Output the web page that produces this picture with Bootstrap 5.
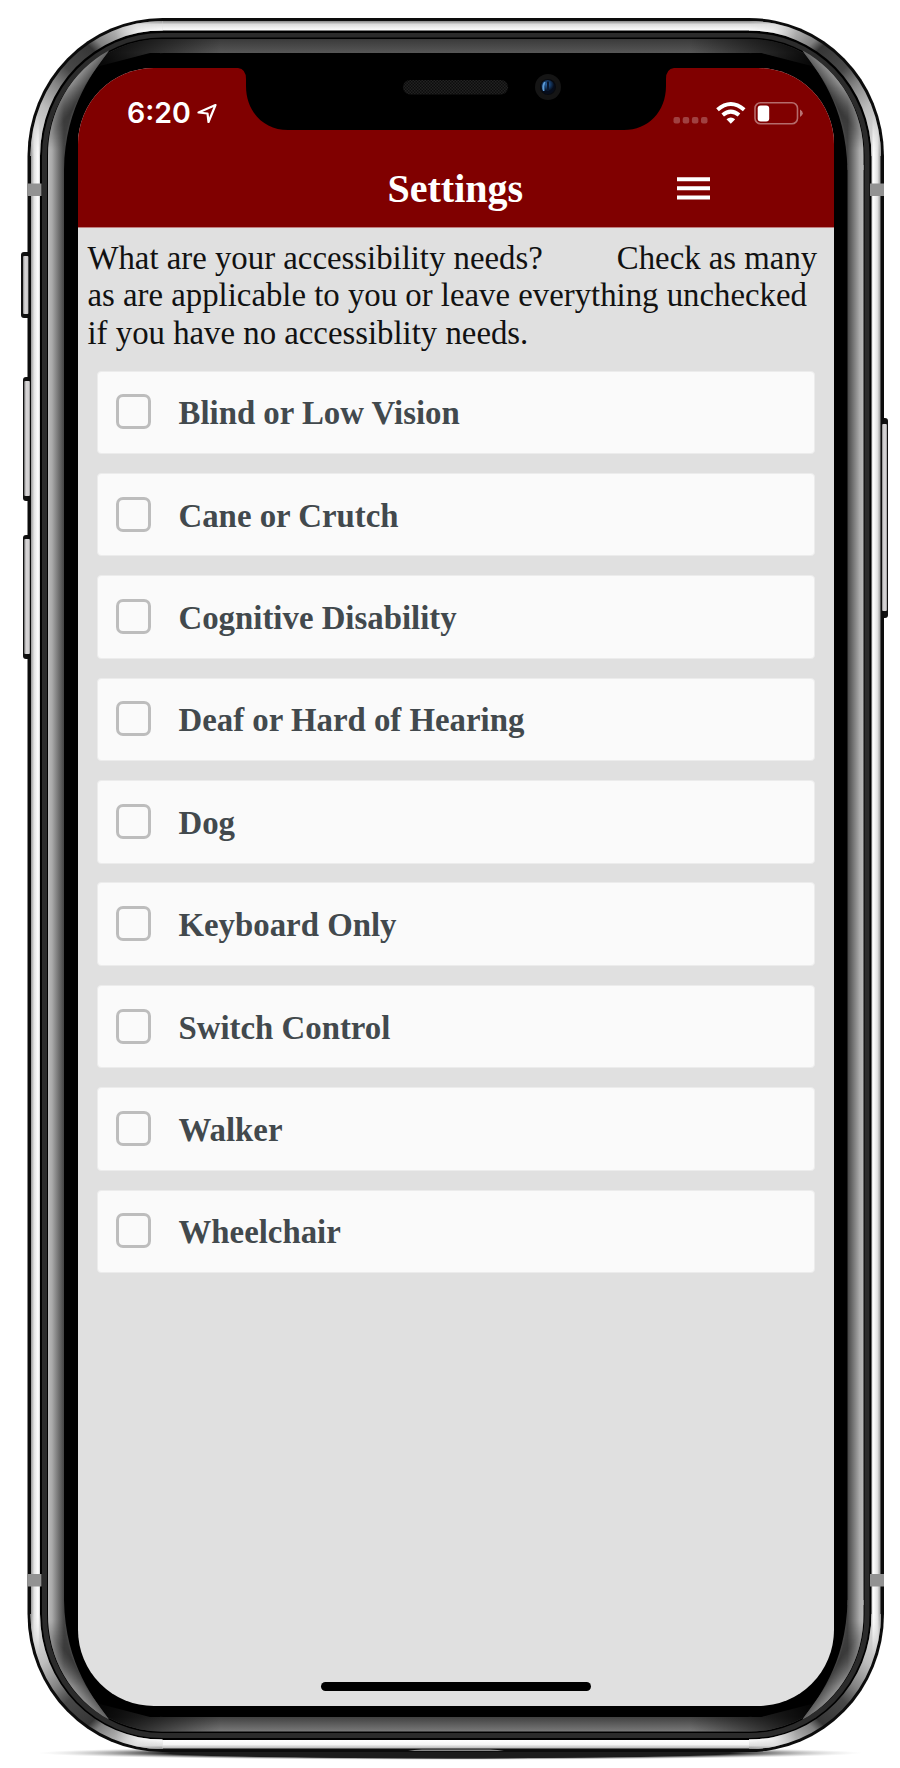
<!DOCTYPE html>
<html lang="en">
<head>
<meta charset="utf-8">
<meta name="viewport" content="width=device-width, initial-scale=1">
<title>Settings</title>
<link rel="stylesheet" href="https://cdn.jsdelivr.net/npm/bootstrap@5.3.0/dist/css/bootstrap.min.css">
<style>
  body { background: #fff; }
  .phone { width: 900px; height: 1768px; padding: 68px 66px 62px 78px; overflow: hidden; }
  .phone-art { position: absolute; left: 0; top: 0; pointer-events: none; }
  .screen { width: 756px; height: 1638px; background: #e0e0e0; border-radius: 76px; overflow: hidden; font-family: "Liberation Serif", "Times New Roman", serif; }
  .app-head { background: #800000; height: 159px; color: #fff; box-shadow: 0 1px 0 #c08080; }
  .status { height: 66px; padding: 13px 31.5px 0 49px; font-family: Inter, "Liberation Sans", sans-serif; }
  .status-icons { margin-top: 20px; }
  .clock { font-size: 28.5px; font-weight: 600; line-height: 64px; letter-spacing: 0; }
  .status .arrow { margin-left: 6.5px; }
  .title-row { height: 93px; padding-right: 124px; }
  .app-title { font-size: 40px; font-weight: 700; line-height: 44px; margin: 0 0 0 309.5px; padding-top: 33px; }
  .menu-btn { padding: 0; margin-top: 35px; line-height: 0; border: 0; }
  .intro { font-size: 32.8px; line-height: 37.5px; color: #111; padding: 12.5px 0 0 9.5px; margin: 0; white-space: nowrap; }
  .intro .hint { margin-left: 74px; }
  .needs { padding: 18.5px 19px 0 18.5px; gap: 18.9px; }
  .need { height: 83.5px; background: #fafafa; border-radius: 4px; padding-left: 18.5px; border: 1px solid #ececec; }
  .need .form-check-input { width: 35px; height: 35px; margin: -1px 0 0; border: 3px solid #bdbdbd; border-radius: 7px; background-color: #fafafa; }
  .need label { font-size: 32.85px; font-weight: 700; color: #42494d; margin-left: 27.5px; line-height: 38px; padding-top: 2px; }
  .home-bar { width: 270px; height: 9px; border-radius: 5px; background: #000; margin: auto auto 15px 243px; }
</style>
</head>
<body>
<div class="phone position-relative">
  <svg class="phone-art" width="900" height="1768" viewBox="0 0 900 1768">
    <defs>
      <linearGradient id="side"><stop offset="0" stop-color="#b8b8b8"/><stop offset=".25" stop-color="#aaa"/><stop offset="1" stop-color="#444"/></linearGradient>
      <linearGradient id="glare" gradientUnits="userSpaceOnUse" x1="48" y1="0" x2="64" y2="0"><stop offset="0" stop-color="#b8b8b8"/><stop offset=".25" stop-color="#aaa"/><stop offset="1" stop-color="#444"/></linearGradient>
      <linearGradient id="tip" gradientUnits="userSpaceOnUse" x1="68" y1="83" x2="84" y2="96"><stop offset="0" stop-color="#a0a0a0"/><stop offset="1" stop-color="#303030"/></linearGradient>
      <linearGradient id="tipfade" gradientUnits="userSpaceOnUse" x1="0" y1="85" x2="0" y2="150"><stop offset="0" stop-color="#fff"/><stop offset="1" stop-color="#000"/></linearGradient>
      <mask id="tipmask" maskUnits="userSpaceOnUse" x="0" y="0" width="200" height="200"><rect width="200" height="200" fill="url(#tipfade)"/></mask>
      <linearGradient id="fadeRight" gradientUnits="userSpaceOnUse" x1="115" y1="0" x2="162" y2="0"><stop offset="0" stop-color="#000"/><stop offset="1" stop-color="#fff"/></linearGradient>
      <mask id="maskRight" maskUnits="userSpaceOnUse" x="0" y="0" width="200" height="200"><rect width="200" height="200" fill="url(#fadeRight)"/></mask>
      <linearGradient id="fadeDown" gradientUnits="userSpaceOnUse" x1="0" y1="115" x2="0" y2="156"><stop offset="0" stop-color="#000"/><stop offset="1" stop-color="#fff"/></linearGradient>
      <mask id="maskDown" maskUnits="userSpaceOnUse" x="0" y="0" width="200" height="200"><rect width="200" height="200" fill="url(#fadeDown)"/></mask>
      <linearGradient id="bands" gradientUnits="userSpaceOnUse" x1="0" y1="39" x2="0" y2="1732"><stop offset="0" stop-color="#3a3a3a"/><stop offset=".008" stop-color="#565656"/><stop offset=".02" stop-color="#333"/><stop offset=".98" stop-color="#222"/><stop offset=".991" stop-color="#404040"/><stop offset="1" stop-color="#7b7b7b"/></linearGradient>
      <linearGradient id="fade" gradientUnits="userSpaceOnUse" x1="100" y1="0" x2="811.5" y2="0"><stop offset="0" stop-color="#000" stop-opacity=".9"/><stop offset=".17" stop-color="#000" stop-opacity="0"/><stop offset=".83" stop-color="#000" stop-opacity="0"/><stop offset="1" stop-color="#000" stop-opacity=".9"/></linearGradient>
      <linearGradient id="rimTop" gradientUnits="userSpaceOnUse" x1="0" y1="21" x2="0" y2="31"><stop offset="0" stop-color="#888"/><stop offset=".35" stop-color="#ddd"/><stop offset="1" stop-color="#fff"/></linearGradient>
      <linearGradient id="rimBottom" gradientUnits="userSpaceOnUse" x1="0" y1="1740" x2="0" y2="1749"><stop offset="0" stop-color="#fff"/><stop offset=".5" stop-color="#f4f4f4"/><stop offset="1" stop-color="#aaa"/></linearGradient>
      <linearGradient id="bend" gradientUnits="userSpaceOnUse" x1="20" y1="132" x2="128" y2="18"><stop offset="0" stop-color="#e0e0e0"/><stop offset=".22" stop-color="#bdbdbd"/><stop offset=".38" stop-color="#858585"/><stop offset=".5" stop-color="#484848"/><stop offset=".7" stop-color="#363636"/><stop offset=".76" stop-color="#808080"/><stop offset="1" stop-color="#dcdcdc"/></linearGradient>
      <linearGradient id="sheen" gradientUnits="userSpaceOnUse" x1="31" y1="0" x2="40" y2="0"><stop offset="0" stop-color="#999"/><stop offset=".35" stop-color="#e4e4e4"/><stop offset=".8" stop-color="#fff"/><stop offset="1" stop-color="#ccc"/></linearGradient>
      <radialGradient id="shadow"><stop offset="0" stop-color="#1c1c1c"/><stop offset=".68" stop-color="#1c1c1c"/><stop offset="1" stop-color="#ccc" stop-opacity="0"/></radialGradient>
      <linearGradient id="key"><stop offset="0" stop-color="#888"/><stop offset=".35" stop-color="#d8d6d7"/><stop offset=".8" stop-color="#d0cecf"/><stop offset="1" stop-color="#888"/></linearGradient>
      <g id="corner">
        <path d="M30.500 156A132 135 0 0 1 162.500 21V30.500A122 126 0 0 0 40 156Z" fill="url(#bend)"/>
        <path d="M30.500 156A132 135 0 0 1 162.500 21V30.500A122 126 0 0 0 40 156Z" fill="url(#rimTop)" mask="url(#maskRight)"/>
        <path d="M30.500 156A132 135 0 0 1 162.500 21V30.500A122 126 0 0 0 40 156Z" fill="url(#sheen)" mask="url(#maskDown)"/>
        <path d="M48 170V156A115 118 0 0 1 109 50.500C96 69 65 104 64 170Z" fill="url(#glare)"/>
        <path d="M48 156A115 118 0 0 1 109 50.500C96 69 65 104 64 156Z" fill="url(#tip)" mask="url(#tipmask)"/>
      </g>
    </defs>
    <ellipse cx="450" cy="1753" rx="413" ry="7" fill="url(#shadow)"/>
    <path d="M170 1747H730V1754Q450 1763 170 1754Z" fill="#1c1c1c"/>
    <!-- hardware keys -->
    <g fill="#111">
      <rect x="21" y="252" width="12" height="66" rx="3"/>
      <rect x="23" y="377" width="10" height="124" rx="3"/>
      <rect x="23" y="535" width="10" height="124" rx="3"/>
      <rect x="878" y="418" width="10" height="200" rx="3"/>
    </g>
    <!-- steel band -->
    <rect x="27.500" y="18" width="856.500" height="1734" rx="135" ry="138" fill="#0c0c0c"/>
    <rect x="162" y="21" width="587.500" height="11" fill="url(#rimTop)"/>
    <rect x="162" y="1739" width="587.500" height="9.500" fill="url(#rimBottom)"/>
    <rect x="31" y="156" width="9.500" height="1458" fill="url(#sheen)"/>
    <rect x="31" y="156" width="9.500" height="1458" fill="url(#sheen)" transform="translate(911.500 0) scale(-1 1)"/>
    <g fill="url(#key)">
      <rect x="23" y="256" width="5.500" height="58" rx="1"/>
      <rect x="24.200" y="381" width="5.800" height="115" rx="1"/>
      <rect x="24.200" y="539" width="5.800" height="115" rx="1"/>
      <rect x="882" y="424" width="5" height="187" rx="1"/>
    </g>
    <rect x="40" y="30.500" width="831.500" height="1709.500" rx="122" ry="126" fill="#000"/>
    <rect x="42" y="33" width="827.500" height="1705" rx="120" ry="123" fill="#2b2b2b"/>
    <rect x="47" y="37.500" width="817.500" height="1695.500" rx="115" ry="118" fill="#000"/>
    <rect x="48" y="39" width="815.500" height="1692.500" rx="114" ry="117" fill="url(#bands)"/>
    <rect x="48" y="39" width="815.500" height="1692.500" rx="114" ry="117" fill="url(#fade)"/>
    <rect x="64" y="53" width="783.500" height="1664" rx="100" ry="104" fill="#000"/>
    <path d="M60 170V130Q70 90 100 66L150 53H160V80L70 170ZM851.500 170V130Q841.500 90 811.500 66L761.500 53H751.500V80L841.500 170ZM60 1600V1640Q70 1680 100 1704L150 1717H160V1690L70 1600ZM851.500 1600V1640Q841.500 1680 811.500 1704L761.500 1717H751.500V1690L841.500 1600Z" fill="#000"/>
    <rect x="48" y="165" width="16" height="1440" fill="url(#side)"/>
    <rect x="48" y="165" width="16" height="1440" fill="url(#side)" transform="translate(911.500 0) scale(-1 1)"/>
    <use href="#corner"/>
    <use href="#corner" transform="translate(911.500 0) scale(-1 1)"/>
    <use href="#corner" transform="translate(0 1770) scale(1 -1)"/>
    <use href="#corner" transform="translate(911.500 1770) scale(-1 -1)"/>
    <!-- antenna lines -->
    <path d="M27.500 183.500H41.500V196H27.500ZM870 183.500H884V196H870ZM27.500 1574H41.500V1586.500H27.500ZM870 1574H884V1586.500H870Z" fill="#929292"/>
    <path d="M408 1751Q414 1749.500 422 1749.500H490Q498 1749.500 504 1751Z" fill="#888"/>
  </svg>

  <main class="screen position-relative d-flex flex-column">
    <header class="app-head flex-shrink-0">
      <div class="status d-flex align-items-start justify-content-between">
        <div class="d-flex align-items-center">
          <span class="clock">6:20</span>
          <svg class="arrow" width="21" height="21" viewBox="0 0 21 21" fill="none" stroke="#fff" stroke-width="2.200" stroke-linejoin="round"><path d="M18.500 2L1.500 9.500L10.500 10.500L11.500 19Z"/></svg>
        </div>
        <svg class="status-icons" width="131" height="24" viewBox="0 0 131 24">
          <g fill="#fff" fill-opacity=".25"><rect x="1.500" y="16" width="6.500" height="6.500" rx="2"/><rect x="10.700" y="16" width="6.500" height="6.500" rx="2"/><rect x="19.900" y="16" width="6.500" height="6.500" rx="2"/><rect x="29" y="16" width="6.500" height="6.500" rx="2"/></g>
          <g fill="none" stroke="#fff" stroke-width="4"><path d="M45.500 8.700Q58.800 -2.700 72.200 8.700"/><path d="M50.700 14Q58.800 7.200 67 14"/></g>
          <path d="M54.500 18.200Q58.800 14.600 63.200 18.200L58.800 22.700Z" fill="#fff"/>
          <rect x="83" y="1.800" width="42.500" height="21" rx="5.500" fill="none" stroke="#fff" stroke-opacity=".42" stroke-width="1.600"/>
          <rect x="85.700" y="4.400" width="11.500" height="16" rx="3" fill="#fff"/>
          <path d="M128 8.500Q130.800 10 130.800 12.200Q130.800 14.500 128 16Z" fill="#fff" fill-opacity=".45"/>
        </svg>
      </div>
      <div class="title-row d-flex align-items-start justify-content-between">
        <h1 class="app-title">Settings</h1>
        <button class="btn menu-btn" type="button" aria-label="Menu">
          <svg width="33" height="34" viewBox="0 0 33 34"><path d="M0 8.200H33V12.200H0ZM0 17.300H33V21.300H0ZM0 26.500H33V30.500H0Z" fill="#fff"/></svg>
        </button>
      </div>
    </header>
    <p class="intro">What are your accessibility needs?<span class="hint">Check as many</span><br>as are applicable to you or leave everything unchecked<br>if you have no accessiblity needs.</p>
    <div class="needs d-flex flex-column">
      <div class="need d-flex align-items-center"><input class="form-check-input" type="checkbox" id="n1"><label for="n1">Blind or Low Vision</label></div>
      <div class="need d-flex align-items-center"><input class="form-check-input" type="checkbox" id="n2"><label for="n2">Cane or Crutch</label></div>
      <div class="need d-flex align-items-center"><input class="form-check-input" type="checkbox" id="n3"><label for="n3">Cognitive Disability</label></div>
      <div class="need d-flex align-items-center"><input class="form-check-input" type="checkbox" id="n4"><label for="n4">Deaf or Hard of Hearing</label></div>
      <div class="need d-flex align-items-center"><input class="form-check-input" type="checkbox" id="n5"><label for="n5">Dog</label></div>
      <div class="need d-flex align-items-center"><input class="form-check-input" type="checkbox" id="n6"><label for="n6">Keyboard Only</label></div>
      <div class="need d-flex align-items-center"><input class="form-check-input" type="checkbox" id="n7"><label for="n7">Switch Control</label></div>
      <div class="need d-flex align-items-center"><input class="form-check-input" type="checkbox" id="n8"><label for="n8">Walker</label></div>
      <div class="need d-flex align-items-center"><input class="form-check-input" type="checkbox" id="n9"><label for="n9">Wheelchair</label></div>
    </div>
    <div class="home-bar"></div>
  </main>

  <!-- notch with speaker and camera -->
  <svg class="phone-art" width="900" height="140" viewBox="0 0 900 140">
    <defs>
      <pattern id="mesh" width="3" height="3" patternUnits="userSpaceOnUse"><rect width="3" height="3" fill="#0c0c0c"/><path d="M0 0H1.500V1.500H0ZM1.500 1.500H3V3H1.500Z" fill="#222"/></pattern>
      <radialGradient id="lens" cx=".45" cy=".3"><stop offset="0" stop-color="#2a63a5"/><stop offset=".55" stop-color="#14365f"/><stop offset="1" stop-color="#060d1c"/></radialGradient>
    </defs>
    <path d="M236 67V68H238Q246 69 246 79V86C246 112 264 130 288 130H624C648 130 666 112 666 86V79Q666 69 674 68H676V67Z" fill="#000"/>
    <rect x="403" y="80" width="105" height="14.500" rx="7.200" fill="url(#mesh)"/>
    <circle cx="548" cy="87" r="13" fill="#151515"/><circle cx="548" cy="87" r="8" fill="#080a10"/><circle cx="547.700" cy="87" r="7" fill="url(#lens)"/>
    <path d="M543 91Q541 86 544 82L545.500 82Q543.500 86 544.500 91Z" fill="#5b9bd8"/><path d="M547 81.500H549V91H547Z" fill="#0a1830"/>
  </svg>
</div>
<script src="https://cdn.jsdelivr.net/npm/bootstrap@5.3.0/dist/js/bootstrap.bundle.min.js"></script>
</body>
</html>
